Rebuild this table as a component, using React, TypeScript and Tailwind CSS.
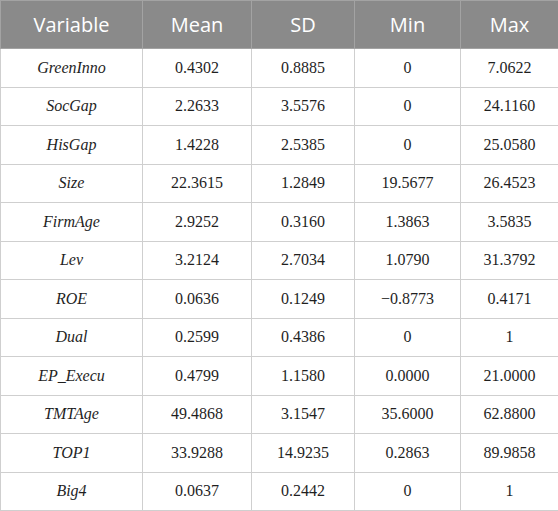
import React from 'react'

const rows: [string, string, string, string, string][] = [
  ['GreenInno', '0.4302', '0.8885', '0', '7.0622'],
  ['SocGap', '2.2633', '3.5576', '0', '24.1160'],
  ['HisGap', '1.4228', '2.5385', '0', '25.0580'],
  ['Size', '22.3615', '1.2849', '19.5677', '26.4523'],
  ['FirmAge', '2.9252', '0.3160', '1.3863', '3.5835'],
  ['Lev', '3.2124', '2.7034', '1.0790', '31.3792'],
  ['ROE', '0.0636', '0.1249', '\u22120.8773', '0.4171'],
  ['Dual', '0.2599', '0.4386', '0', '1'],
  ['EP_Execu', '0.4799', '1.1580', '0.0000', '21.0000'],
  ['TMTAge', '49.4868', '3.1547', '35.6000', '62.8800'],
  ['TOP1', '33.9288', '14.9235', '0.2863', '89.9858'],
  ['Big4', '0.0637', '0.2442', '0', '1'],
]

const headers = ['Variable', 'Mean', 'SD', 'Min', 'Max']
const widths = ['w-[142px]', 'w-[109px]', 'w-[103px]', 'w-[106px]', 'w-[98px]']

export default function App() {
  return (
    <div className="w-[558px] h-[511px] bg-white">
      <table className="w-[558px] border-collapse table-fixed">
        <colgroup>
          {widths.map((w, i) => (
            <col key={i} className={w} />
          ))}
        </colgroup>
        <thead>
          <tr className="h-[48px] bg-[#8a8a8a]">
            {headers.map((h) => (
              <th
                key={h}
                className="border border-[#a3a3a3] text-white font-normal text-[20px] text-center font-['Open_Sans',sans-serif] p-0"
              >
                {h}
              </th>
            ))}
          </tr>
        </thead>
        <tbody>
          {rows.map((r) => (
            <tr key={r[0]} className="h-[38.5px]">
              {r.map((c, i) => (
                <td
                  key={i}
                  className={`border border-[#cfcfcf] text-center text-[16px] text-[#1f1f1f] font-['Liberation_Serif',serif] p-0 ${
                    i === 0 ? 'italic' : ''
                  }`}
                >
                  {c}
                </td>
              ))}
            </tr>
          ))}
        </tbody>
      </table>
    </div>
  )
}
